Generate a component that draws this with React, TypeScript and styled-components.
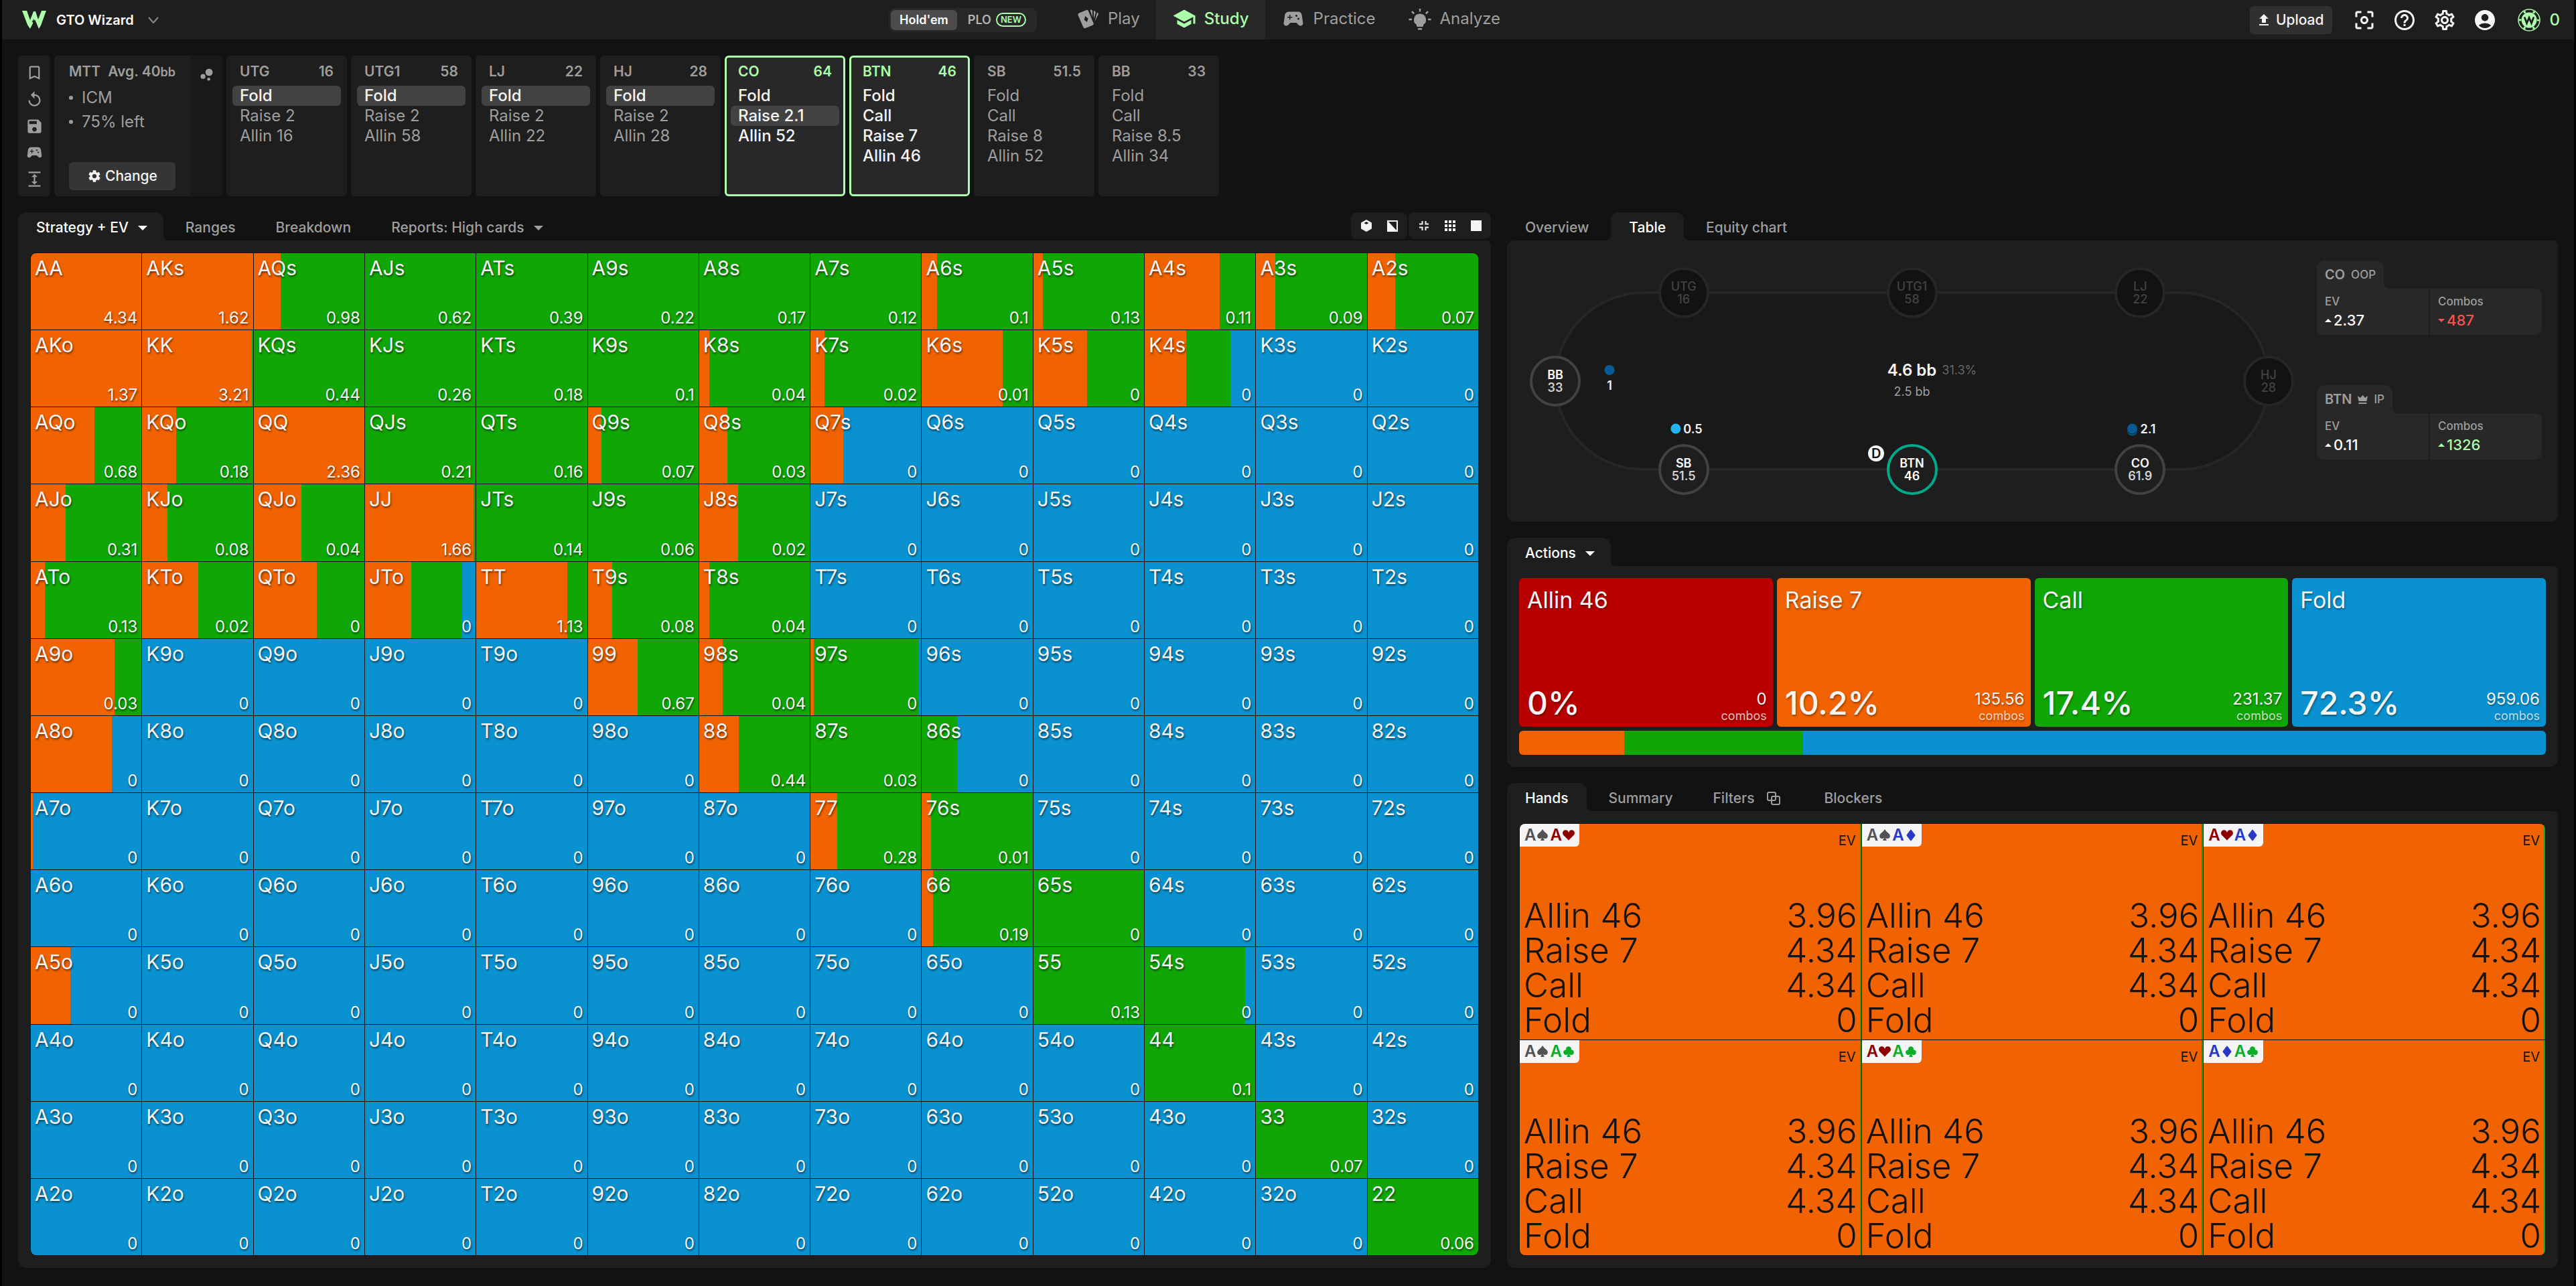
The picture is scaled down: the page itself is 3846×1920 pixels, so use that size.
import React from "react";
import styled, { createGlobalStyle, css } from "styled-components";
import {
  MdAccountCircle, MdApps, MdBookmarkBorder, MdBubbleChart, MdCenterFocusWeak, MdExpand, MdHelpOutline,
  MdOutlineSettings, MdReplay, MdSave, MdSchool, MdSettings, MdSportsEsports, MdUpload,
} from "react-icons/md";
import { BsSuitClubFill, BsSuitDiamondFill, BsSuitHeartFill, BsSuitSpadeFill } from "react-icons/bs";

const color = {
  page: "#121212",
  panel: "#1e1e1e",
  raised: "#282828",
  muted: "#9e9e9e",
  text: "#f5f5f5",
  mint: "#acfdac",
  allin: "#b80000",
  raise: "#f16300",
  call: "#10a606",
  fold: "#0a92d0",
};

const GlobalStyle = createGlobalStyle`
  * { box-sizing: border-box; }
  body { margin: 0; background: ${color.page}; color: ${color.text}; font: 400 24px/30px Inter, "Liberation Sans", sans-serif; }
  button { font: inherit; color: inherit; background: none; border: 0; padding: 0; cursor: pointer; text-align: left; }
  a { color: inherit; text-decoration: none; }
  ul, dl, dd { margin: 0; padding: 0; list-style: none; }
  svg { display: block; flex: none; }
`;

/* ---------- Shell ---------- */

const Shell = styled.div`
  min-height: 100vh;
  display: flex;
  flex-direction: column;
  border: solid #000;
  border-width: 0 3px;
`;

const TopBar = styled.header`
  display: grid;
  grid-template-columns: 1fr auto 1fr;
  height: 59px;
  background: ${color.panel};
  padding: 0 21px;
`;

const TopLeft = styled.div`
  display: flex;
  align-items: center;
  justify-content: space-between;
  padding: 0 34px 0 9px;
`;

const Brand = styled.button`
  display: flex;
  align-items: center;
  gap: 15px;
  font-size: 20px;
  font-weight: 600;
  color: #fff;
`;

const BrandName = styled.span`
  margin-right: 6px;
`;

const GameToggle = styled.div`
  display: flex;
  gap: 3px;
  padding: 3px;
  border-radius: 9px;
  background: #282828;
`;

const GameOption = styled.button<{ $on?: boolean }>`
  display: flex;
  align-items: center;
  gap: 7px;
  height: 30px;
  padding: 0 13px;
  border-radius: 6px;
  font-size: 18px;
  font-weight: 600;
  background: ${(p) => (p.$on ? "#4c4c4c" : "transparent")};
  color: ${(p) => (p.$on ? "#fff" : "#b4b4b4")};
`;

const NewBadge = styled.span`
  padding: 0 5px;
  border: 2px solid ${color.mint};
  border-radius: 11px;
  font-size: 13px;
  line-height: 17px;
  color: ${color.mint};
`;

const Nav = styled.nav`
  display: flex;
`;

const NavLink = styled.a<{ $on?: boolean }>`
  display: flex;
  align-items: center;
  gap: 12px;
  padding: 0 24px 3px;
  background: ${(p) => (p.$on ? color.raised : "transparent")};
  color: ${(p) => (p.$on ? color.mint : color.muted)};
  font-weight: ${(p) => (p.$on ? 500 : 400)};
`;

const TopRight = styled.div`
  display: flex;
  align-items: center;
  justify-content: flex-end;
  gap: 24px;
`;

const UploadButton = styled.button`
  display: flex;
  align-items: center;
  gap: 6px;
  height: 42px;
  padding: 0 12px 0 9px;
  margin-right: 6px;
  border-radius: 6px;
  background: #303030;
  font-size: 21px;
  font-weight: 500;
`;

const Balance = styled.button`
  display: flex;
  align-items: center;
  gap: 14px;
  margin-left: 7px;
  color: ${color.mint};
  font-weight: 500;
`;

/* ---------- Setup row ---------- */

const Body = styled.main`
  flex: 1;
  display: flex;
  flex-direction: column;
  gap: 24px;
  padding: 24px 24px 27px;
`;

const SetupRow = styled.div`
  display: flex;
  gap: 6px;
  height: 210px;
`;

const ToolColumn = styled.div`
  display: flex;
  flex-direction: column;
  justify-content: space-between;
  align-items: center;
  width: 48px;
  padding: 12px 0;
  border-radius: 6px;
  background: ${color.panel};
  color: ${color.muted};
`;

const SpotCard = styled.section`
  display: flex;
  width: 251px;
  border-radius: 6px;
  overflow: hidden;
  background: ${color.panel};
  color: ${color.muted};
`;

const SpotInfo = styled.div`
  flex: 1;
  display: flex;
  flex-direction: column;
  padding: 9px 22px;
`;

const SpotTitle = styled.div`
  display: flex;
  justify-content: space-between;
  font-size: 21px;
  font-weight: 600;
`;

const Unit = styled.small`
  font-size: 18px;
`;

const SpotFacts = styled.ul`
  padding-top: 5px;
  line-height: 36px;
`;

const SpotFact = styled.li`
  display: flex;
  align-items: center;
  gap: 13px;
  &::before {
    content: "";
    width: 6px;
    height: 6px;
    border-radius: 50%;
    background: currentColor;
  }
`;

const ChangeButton = styled.button`
  display: flex;
  align-items: center;
  justify-content: center;
  gap: 5px;
  height: 42px;
  margin-top: auto;
  border-radius: 6px;
  background: #353535;
  color: ${color.text};
  font-size: 21px;
  font-weight: 500;
`;

const SpotSide = styled.button`
  display: flex;
  justify-content: center;
  align-items: flex-start;
  width: 48px;
  padding-top: 15px;
  background: #191919;
`;

const PositionCard = styled.section<{ $active?: boolean }>`
  width: 180px;
  padding: 9px;
  border-radius: 6px;
  background: ${(p) => (p.$active ? color.raised : color.panel)};
  color: ${color.muted};
  ${(p) => p.$active && css`box-shadow: inset 0 0 0 3px ${color.mint};`}
`;

const PositionHead = styled.div<{ $active?: boolean }>`
  display: flex;
  justify-content: space-between;
  padding: 0 11px;
  margin-bottom: 6px;
  font-size: 21px;
  font-weight: 600;
  color: ${(p) => (p.$active ? color.mint : color.muted)};
`;

const PositionAction = styled.button<{ $picked?: boolean; $active?: boolean }>`
  display: block;
  width: 100%;
  height: 30px;
  padding: 0 11px;
  border-radius: 6px;
  line-height: 30px;
  background: ${(p) => (p.$picked ? "#424242" : "transparent")};
  color: ${(p) => (p.$picked || p.$active ? color.text : color.muted)};
  font-weight: ${(p) => (p.$picked || p.$active ? 500 : 400)};
`;

/* ---------- Tabbed panels ---------- */

const Columns = styled.div`
  flex: 1;
  display: grid;
  grid-template-columns: 2199fr 1569fr;
  gap: 24px;
`;

const Column = styled.div`
  display: flex;
  flex-direction: column;
  gap: 24px;
  min-width: 0;
`;

const Section = styled.section<{ $grow?: boolean }>`
  display: flex;
  flex-direction: column;
  flex: ${(p) => (p.$grow ? 1 : "none")};
`;

const TabBar = styled.div`
  display: flex;
  gap: 6px;
  height: 42px;
`;

const Tab = styled.button<{ $on?: boolean; $menu?: boolean }>`
  position: relative;
  display: flex;
  align-items: center;
  gap: 14px;
  padding: 4px ${(p) => (p.$menu ? 24 : 27)}px 0 27px;
  border-radius: 12px 12px 0 0;
  font-size: 21px;
  font-weight: 500;
  background: ${(p) => (p.$on ? color.panel : "transparent")};
  color: ${(p) => (p.$on ? "#fff" : color.muted)};
  ${(p) => p.$on && css`
    &::before, &::after {
      content: "";
      position: absolute;
      bottom: 0;
      width: 8px;
      height: 8px;
    }
    &::before { right: 100%; background: radial-gradient(circle at 0 0, transparent 8px, ${color.panel} 8px); }
    &::after { left: 100%; background: radial-gradient(circle at 100% 0, transparent 8px, ${color.panel} 8px); }
    &:first-child::before { display: none; }
  `}
`;

const Caret = styled.span<{ $up?: boolean; $small?: boolean }>`
  width: 0;
  height: 0;
  border: solid transparent;
  border-width: 0 ${(p) => (p.$small ? 5 : 7)}px;
  ${(p) => (p.$up ? "border-bottom" : "border-top")}: ${(p) => (p.$small ? 5 : 7)}px solid currentColor;
`;

const ViewTools = styled.div`
  display: flex;
  gap: 2px;
  margin-left: auto;
`;

const ViewGroup = styled.div`
  display: flex;
  height: 40px;
  padding: 0 3px;
  border-radius: 9px;
  background: ${color.panel};
`;

const ViewButton = styled.button`
  display: flex;
  align-items: center;
  justify-content: center;
  width: 39px;
`;

const Panel = styled.div<{ $square?: boolean }>`
  flex: 1;
  display: flex;
  flex-direction: column;
  padding: 18px;
  border-radius: ${(p) => (p.$square ? 0 : 12)}px 8px 12px 12px;
  background: ${color.panel};
`;

/* ---------- Range matrix ---------- */

const Matrix = styled.div`
  flex: 1;
  display: grid;
  grid-template-columns: repeat(13, 1fr);
  grid-auto-rows: minmax(90px, 1fr);
  gap: 1px;
  border: 1px solid ${color.page};
  border-radius: 9px;
  overflow: hidden;
  background: ${color.page};
`;

const HandCell = styled.button`
  display: flex;
  flex-direction: column;
  justify-content: space-between;
  padding: 7px 6px 2px;
  text-shadow: 1px 2px 3px rgba(0, 0, 0, 0.6);
`;

const HandName = styled.span`
  font-size: 30px;
  line-height: 30px;
`;

const HandEv = styled.span`
  align-self: flex-end;
  font-size: 24px;
  line-height: 30px;
`;

/* ---------- Poker table ---------- */

const TablePanel = styled(Panel)`
  flex-direction: row;
  padding: 0 24px 0 0;
`;

const TableArea = styled.div`
  flex: 1;
  padding: 78px 72px;
`;

const Felt = styled.div`
  position: relative;
  height: 264px;
`;

const FeltEdge = styled.div`
  position: absolute;
  inset: -2px;
  border: 4px solid #262626;
  border-radius: 134px;
  background: #191919;
`;

const Pinned = styled.div<{ $x: number; $y: number }>`
  position: absolute;
  left: ${(p) => p.$x}%;
  top: ${(p) => p.$y}%;
  transform: translate(-50%, -50%);
`;

const Seat = styled(Pinned)<{ $state: "out" | "in" | "hero" }>`
  display: flex;
  flex-direction: column;
  align-items: center;
  justify-content: center;
  width: 76px;
  height: 76px;
  border-radius: 50%;
  border: 4px solid ${(p) => ({ out: "#262626", in: "#424242", hero: "#00a98b" })[p.$state]};
  background: ${(p) => (p.$state === "out" ? color.page : color.panel)};
  color: ${(p) => (p.$state === "out" ? "#424242" : "#fff")};
  font-size: 18px;
  line-height: 19px;
  font-weight: ${(p) => (p.$state === "out" ? 500 : 600)};
`;

const SeatStack = styled.span<{ $dim?: boolean }>`
  color: ${(p) => (p.$dim ? "#d0d0d0" : "inherit")};
`;

const Bet = styled(Pinned)<{ $column?: boolean }>`
  display: flex;
  flex-direction: ${(p) => (p.$column ? "column" : "row")};
  align-items: center;
  gap: 4px;
  font-size: 18px;
  line-height: 23px;
  font-weight: 600;
`;

const Chip = styled.span<{ $color: string; $stacked?: boolean }>`
  width: 15px;
  height: 15px;
  border-radius: 50%;
  background: ${(p) => p.$color};
  ${(p) => p.$stacked && css`box-shadow: 0 1px 0 #191919, 0 3px 0 ${p.$color};`}
`;

const Dealer = styled(Pinned)`
  width: 24px;
  height: 24px;
  border-radius: 50%;
  background: ${color.text};
  color: ${color.page};
  font-size: 20px;
  line-height: 24px;
  font-weight: 600;
  text-align: center;
`;

const Pot = styled(Pinned)`
  font-weight: 600;
  white-space: nowrap;
`;

const PotOdds = styled.span`
  position: absolute;
  left: 100%;
  padding-left: 8px;
  font-size: 18px;
  font-weight: 400;
  color: #666;
`;

const PotBefore = styled(Pinned)`
  font-size: 18px;
  color: ${color.muted};
  white-space: nowrap;
`;

const PlayerStats = styled.div`
  display: flex;
  flex-direction: column;
  gap: 75px;
  width: 336px;
  padding-top: 30px;
`;

const PlayerTab = styled.div`
  position: relative;
  display: inline-flex;
  align-items: center;
  gap: 9px;
  height: 42px;
  padding: 0 12px;
  border-radius: 12px 12px 0 0;
  background: ${color.raised};
  color: ${color.muted};
  font-size: 20px;
  font-weight: 600;
  vertical-align: top;
  &::after {
    content: "";
    position: absolute;
    left: 100%;
    bottom: 0;
    width: 8px;
    height: 8px;
    background: radial-gradient(circle at 100% 0, transparent 8px, ${color.raised} 8px);
  }
`;

const PlayerRole = styled.span`
  font-size: 17px;
  font-weight: 500;
`;

const StatGrid = styled.dl`
  display: grid;
  grid-template-columns: 1fr 1fr;
  gap: 2px;
`;

const Stat = styled.div`
  height: 69px;
  padding: 6px 12px;
  background: ${color.raised};
  &:first-child { border-radius: 0 0 0 9px; }
  &:last-child { border-radius: 0 9px 9px 0; }
`;

const StatLabel = styled.dt`
  color: ${color.muted};
  font-size: 17px;
  line-height: 26px;
  font-weight: 500;
`;

const StatValue = styled.dd<{ $color: string }>`
  display: flex;
  align-items: center;
  gap: 3px;
  color: ${(p) => p.$color};
  font-size: 22px;
  font-weight: 500;
`;

/* ---------- Actions ---------- */

const ActionGrid = styled.div`
  display: grid;
  grid-template-columns: repeat(4, 1fr);
  gap: 6px;
`;

const ActionCard = styled.button<{ $color: string }>`
  display: flex;
  flex-direction: column;
  justify-content: space-between;
  height: 222px;
  padding: 12px 9px 6px 12px;
  border-radius: 6px;
  background: ${(p) => p.$color};
  text-shadow: 1px 2px 3px rgba(0, 0, 0, 0.4);
`;

const ActionName = styled.span`
  font-size: 34px;
  line-height: 42px;
`;

const ActionFoot = styled.span`
  display: flex;
  justify-content: space-between;
  align-items: flex-end;
  width: 100%;
`;

const ActionShare = styled.span`
  font-size: 48px;
  line-height: 58px;
  font-weight: 500;
`;

const ActionCombos = styled.span`
  display: flex;
  flex-direction: column;
  align-items: flex-end;
  font-size: 24px;
  line-height: 30px;
`;

const CombosLabel = styled.span`
  font-size: 18px;
  line-height: 20px;
  opacity: 0.75;
`;

const ShareBar = styled.div`
  display: flex;
  height: 36px;
  margin-top: 6px;
  border-radius: 6px;
  overflow: hidden;
`;

const ShareSlice = styled.div<{ $color: string }>`
  background: ${(p) => p.$color};
`;

/* ---------- Hands ---------- */

const ComboGrid = styled.div`
  flex: 1;
  display: grid;
  grid-template-columns: repeat(3, 1fr);
  grid-auto-rows: 1fr;
  gap: 1px;
  border: 1px solid ${color.page};
  border-radius: 9px;
  overflow: hidden;
  background: ${color.page};
`;

const ComboCell = styled.article`
  display: flex;
  flex-direction: column;
  justify-content: space-between;
  padding-bottom: 3px;
  background: ${color.raise};
  border-right: 2px solid ${color.call};
  color: ${color.page};
`;

const ComboHead = styled.header`
  display: flex;
  justify-content: space-between;
  align-items: flex-start;
`;

const ComboCards = styled.div`
  display: flex;
  align-items: center;
  gap: 2px;
  height: 34px;
  padding: 0 7px;
  border-radius: 0 0 6px 0;
  background: ${color.text};
  font-weight: 600;
`;

const PlayingCard = styled.span<{ $color: string }>`
  display: flex;
  align-items: center;
  gap: 1px;
  color: ${(p) => p.$color};
`;

const ComboMetric = styled.span`
  padding: 10px 6px 0 0;
  font-size: 20px;
`;

const ComboTable = styled.table`
  width: 100%;
  border-collapse: collapse;
  font-size: 51px;
  line-height: 52px;
  font-weight: 300;
`;

const ComboAction = styled.th`
  padding: 0 0 0 6px;
  font-weight: 300;
  text-align: left;
`;

const ComboEv = styled.td`
  padding: 0 4px 0 0;
  text-align: right;
`;

/* ---------- Drawings ---------- */

const WizardLogo = () => (
  <svg width="36" height="27" viewBox="0 0 36 27" fill={color.mint} aria-hidden="true">
    <path d="M0 0h7l5 14 5-13h3l4 12 5-13h7l-8 22-3 5-6-14-7 14-4-6z" />
    <path d="M17 12l1 3 2 1-2 1-1 4-1-4-2-1 2-1z" fill={color.panel} />
  </svg>
);

const ChevronDown = () => (
  <svg width="16" height="10" viewBox="0 0 16 10" fill="none" stroke="#8a8a8a" strokeWidth="2" aria-hidden="true">
    <path d="M1 1l7 8 7-8" />
  </svg>
);

const CardsIcon = () => (
  <svg width="36" height="36" viewBox="0 0 36 36" fill="currentColor" aria-hidden="true">
    <path fillRule="evenodd" d="M3.500 12.500a2.500 2.500 0 0 1 1.500-3L16 5a2.500 2.500 0 0 1 3 1.400l7.500 18.200a2.500 2.500 0 0 1-1.400 3.200L14.500 32a2.500 2.500 0 0 1-3.200-1.400zM14.200 14l-1.500 5.500 4.300 3.500 1.500-5.500z" />
    <path d="M21.500 4.500h1a2.500 2.500 0 0 1 2.500 2.500v9z" />
    <path d="M27 6l1.500.6a2.500 2.500 0 0 1 1.200 3L27 18z" />
    <path d="M32 8.500l.8.500a2.500 2.500 0 0 1 1 2.500L28.500 22z" />
  </svg>
);

const BulbIcon = () => (
  <svg width="36" height="36" viewBox="0 0 36 36" fill="currentColor" aria-hidden="true">
    <path d="M18 10.500a9 9 0 0 1 5 16.500v1.500a1.500 1.500 0 0 1-1.500 1.500h-7a1.500 1.500 0 0 1-1.500-1.500V27a9 9 0 0 1 5-16.500zM15 32h6v2.500h-6z" />
    <path d="M16.800 3h2.400v4.500h-2.400zM1.500 17.800H6v2.400H1.500zM30 17.800h4.500v2.400H30zM5 8l1.800-1.800 3.400 3.300-1.800 1.800zM31 8l-1.800-1.800-3.400 3.300 1.800 1.800z" />
  </svg>
);

const ChipIcon = () => (
  <svg width="34" height="34" viewBox="0 0 34 34" fill="none" stroke={color.mint} aria-hidden="true">
    <circle cx="17" cy="17" r="16" strokeWidth="1.500" />
    <circle cx="17" cy="17" r="13.500" strokeWidth="3.500" strokeDasharray="3 11.100" strokeDashoffset="1.500" />
    <circle cx="17" cy="17" r="11.500" fill={color.mint} stroke="none" />
    <path d="M10 12.500l3.500 9 3.500-8 3.500 8 3.500-9" stroke={color.panel} strokeWidth="2.800" />
  </svg>
);

const DiceIcon = () => (
  <svg width="16" height="18" viewBox="0 0 16 18" aria-hidden="true">
    <path fill={color.text} d="M8 0l8 4.500v9L8 18l-8-4.500v-9z" />
    <path fill={color.panel} d="M8 3l3.500 2L8 7 4.500 5z" />
  </svg>
);

const ContrastIcon = () => (
  <svg width="16" height="17" viewBox="0 0 16 17" aria-hidden="true">
    <rect x="1" y="1" width="14" height="15" fill="none" stroke={color.text} strokeWidth="2" />
    <path fill={color.text} d="M1 1l14 15H1z" />
  </svg>
);

const CompactIcon = () => (
  <svg width="14" height="14" viewBox="0 0 14 14" fill="none" stroke={color.text} strokeWidth="2" aria-hidden="true">
    <path d="M0 4.500h4.500V0M9.500 0v4.500H14M14 9.500H9.500V14M4.500 14V9.500H0" />
  </svg>
);

const SquareIcon = () => (
  <svg width="16" height="16" viewBox="0 0 16 16" aria-hidden="true"><rect width="16" height="16" fill={color.text} /></svg>
);

const OverlapIcon = () => (
  <svg width="30" height="20" viewBox="-5 0 30 20" fill="none" stroke="currentColor" strokeWidth="2" aria-hidden="true">
    <rect x="1" y="1" width="12" height="12" rx="2" />
    <rect x="7" y="7" width="12" height="12" rx="2" />
  </svg>
);

const CrownIcon = () => (
  <svg width="15" height="13" viewBox="0 0 15 13" fill="currentColor" aria-hidden="true">
    <path d="M0 1l4 3 3.500-4L11 4l4-3-1.500 8h-12zM1.500 11h12v2h-12z" />
  </svg>
);

/* ---------- Data ---------- */

const positions = [
  { name: "UTG", stack: "16", actions: ["Fold", "Raise 2", "Allin 16"], picked: 0 },
  { name: "UTG1", stack: "58", actions: ["Fold", "Raise 2", "Allin 58"], picked: 0 },
  { name: "LJ", stack: "22", actions: ["Fold", "Raise 2", "Allin 22"], picked: 0 },
  { name: "HJ", stack: "28", actions: ["Fold", "Raise 2", "Allin 28"], picked: 0 },
  { name: "CO", stack: "64", actions: ["Fold", "Raise 2.1", "Allin 52"], picked: 1, active: true },
  { name: "BTN", stack: "46", actions: ["Fold", "Call", "Raise 7", "Allin 46"], picked: -1, active: true },
  { name: "SB", stack: "51.5", actions: ["Fold", "Call", "Raise 8", "Allin 52"], picked: -1 },
  { name: "BB", stack: "33", actions: ["Fold", "Call", "Raise 8.5", "Allin 34"], picked: -1 },
];

const ranks = "AKQJT98765432".split("");

/* hand -> [raise %, raise + call %, EV]; a hand that is not listed always folds */
const strategy: Record<string, [number, number, number]> = {
  AA: [100, 100, 4.34], AKs: [100, 100, 1.62], AQs: [24, 100, 0.98], AJs: [0, 100, 0.62], ATs: [0, 100, 0.39],
  A9s: [0, 100, 0.22], A8s: [0, 100, 0.17], A7s: [0, 100, 0.12], A6s: [14, 100, 0.1], A5s: [8.5, 100, 0.13],
  A4s: [68, 100, 0.11], A3s: [17.5, 100, 0.09], A2s: [25, 100, 0.07],
  AKo: [100, 100, 1.37], KK: [98.5, 100, 3.21], KQs: [0, 100, 0.44], KJs: [0, 100, 0.26], KTs: [0, 100, 0.18],
  K9s: [0, 100, 0.1], K8s: [9, 100, 0.04], K7s: [13, 100, 0.02], K6s: [73, 100, 0.01], K5s: [48.5, 100, 0],
  K4s: [37.5, 77.5, 0],
  AQo: [57.5, 100, 0.68], KQo: [30.5, 100, 0.18], QQ: [100, 100, 2.36], QJs: [0, 100, 0.21], QTs: [0, 100, 0.16],
  Q9s: [12, 100, 0.07], Q8s: [25.5, 100, 0.03], Q7s: [30, 30, 0],
  AJo: [31.5, 100, 0.31], KJo: [23, 100, 0.08], QJo: [43, 100, 0.04], JJ: [98, 100, 1.66], JTs: [0, 100, 0.14],
  J9s: [0, 100, 0.06], J8s: [35, 100, 0.02],
  ATo: [12.5, 100, 0.13], KTo: [50.5, 100, 0.02], QTo: [57, 100, 0], JTo: [42, 88, 0], TT: [82, 100, 1.13],
  T9s: [22, 100, 0.08], T8s: [9, 100, 0.04],
  A9o: [75.5, 100, 0.03], "99": [45, 100, 0.67], "98s": [21.5, 100, 0.04], "97s": [3, 98, 0],
  A8o: [73.5, 73.5, 0], "88": [36, 100, 0.44], "87s": [0, 100, 0.03], "86s": [0, 32, 0],
  A7o: [2, 2, 0], "77": [24.5, 100, 0.28], "76s": [8.5, 100, 0.01],
  "66": [10, 100, 0.19], "65s": [0, 100, 0],
  A5o: [35.5, 35.5, 0], "55": [0, 100, 0.13], "54s": [0, 91, 0],
  "44": [0, 100, 0.1], "33": [0, 100, 0.07], "22": [0, 100, 0.06],
};

const handAt = (row: number, col: number) => {
  if (row === col) return ranks[row] + ranks[col];
  return row < col ? `${ranks[row]}${ranks[col]}s` : `${ranks[col]}${ranks[row]}o`;
};

const hands = ranks.flatMap((_, row) => ranks.map((__, col) => handAt(row, col)));

const mix = (r: number, c: number) =>
  `linear-gradient(90deg, ${color.raise} ${r}%, ${color.call} ${r}% ${c}%, ${color.fold} ${c}%)`;

const actions = [
  { name: "Allin 46", share: 0, combos: "0", color: color.allin },
  { name: "Raise 7", share: 10.2, combos: "135.56", color: color.raise },
  { name: "Call", share: 17.4, combos: "231.37", color: color.call },
  { name: "Fold", share: 72.3, combos: "959.06", color: color.fold },
];

const seats = [
  { name: "UTG", stack: "16", x: 18, y: 0, state: "out" },
  { name: "UTG1", stack: "58", x: 50, y: 0, state: "out" },
  { name: "LJ", stack: "22", x: 82, y: 0, state: "out" },
  { name: "HJ", stack: "28", x: 100, y: 50, state: "out" },
  { name: "CO", stack: "61.9", x: 82, y: 100, state: "in" },
  { name: "BTN", stack: "46", x: 50, y: 100, state: "hero" },
  { name: "SB", stack: "51.5", x: 18, y: 100, state: "in" },
  { name: "BB", stack: "33", x: 0, y: 50, state: "in" },
] as const;

const suits = {
  s: { color: "#525252", Icon: BsSuitSpadeFill },
  h: { color: "#8e0000", Icon: BsSuitHeartFill },
  d: { color: "#2a39c6", Icon: BsSuitDiamondFill },
  c: { color: "#0aae28", Icon: BsSuitClubFill },
};

const combos = ["sh", "sd", "hd", "sc", "hc", "dc"];
const comboEvs = [["Allin 46", "3.96"], ["Raise 7", "4.34"], ["Call", "4.34"], ["Fold", "0"]];

/* ---------- Parts ---------- */

const PlayerCard = ({ name, role, crown, ev, combos: n, down }: {
  name: string; role: string; crown?: boolean; ev: string; combos: string; down?: boolean;
}) => (
  <div>
    <PlayerTab>{name}{crown && <CrownIcon />}<PlayerRole>{role}</PlayerRole></PlayerTab>
    <StatGrid>
      <Stat>
        <StatLabel>EV</StatLabel>
        <StatValue $color="#fff"><Caret $small $up />{ev}</StatValue>
      </Stat>
      <Stat>
        <StatLabel>Combos</StatLabel>
        <StatValue $color={down ? "#f9524f" : color.mint}><Caret $small $up={!down} />{n}</StatValue>
      </Stat>
    </StatGrid>
  </div>
);

const Header = () => (
  <TopBar>
    <TopLeft>
      <Brand type="button"><WizardLogo /><BrandName>GTO Wizard</BrandName><ChevronDown /></Brand>
      <GameToggle>
        <GameOption type="button" $on>Hold'em</GameOption>
        <GameOption type="button">PLO <NewBadge>NEW</NewBadge></GameOption>
      </GameToggle>
    </TopLeft>
    <Nav>
      <NavLink href="#play"><CardsIcon />Play</NavLink>
      <NavLink href="#study" $on><MdSchool size={36} />Study</NavLink>
      <NavLink href="#practice"><MdSportsEsports size={36} />Practice</NavLink>
      <NavLink href="#analyze"><BulbIcon />Analyze</NavLink>
    </Nav>
    <TopRight>
      <UploadButton type="button"><MdUpload size={24} />Upload</UploadButton>
      <button type="button" aria-label="Focus"><MdCenterFocusWeak size={36} /></button>
      <button type="button" aria-label="Help"><MdHelpOutline size={36} /></button>
      <button type="button" aria-label="Settings"><MdOutlineSettings size={36} /></button>
      <button type="button" aria-label="Account"><MdAccountCircle size={36} /></button>
      <Balance type="button"><ChipIcon />0</Balance>
    </TopRight>
  </TopBar>
);

const Setup = () => (
  <SetupRow>
    <ToolColumn>
      <button type="button" aria-label="Bookmark"><MdBookmarkBorder size={27} /></button>
      <button type="button" aria-label="Reset"><MdReplay size={27} /></button>
      <button type="button" aria-label="Save"><MdSave size={27} /></button>
      <button type="button" aria-label="Practice"><MdSportsEsports size={27} /></button>
      <button type="button" aria-label="Expand"><MdExpand size={27} /></button>
    </ToolColumn>
    <SpotCard>
      <SpotInfo>
        <SpotTitle><span>MTT</span><span>Avg. 40<Unit>bb</Unit></span></SpotTitle>
        <SpotFacts><SpotFact>ICM</SpotFact><SpotFact>75% left</SpotFact></SpotFacts>
        <ChangeButton type="button"><MdSettings size={22} />Change</ChangeButton>
      </SpotInfo>
      <SpotSide type="button" aria-label="Stack distribution"><MdBubbleChart size={27} color={color.muted} /></SpotSide>
    </SpotCard>
    {positions.map((p) => (
      <PositionCard key={p.name} $active={p.active}>
        <PositionHead $active={p.active}><span>{p.name}</span><span>{p.stack}</span></PositionHead>
        {p.actions.map((a, i) => (
          <PositionAction key={a} type="button" $picked={i === p.picked} $active={p.active}>{a}</PositionAction>
        ))}
      </PositionCard>
    ))}
  </SetupRow>
);

const StrategySection = () => (
  <Section $grow>
    <TabBar>
      <Tab type="button" $on $menu>Strategy + EV<Caret /></Tab>
      <Tab type="button">Ranges</Tab>
      <Tab type="button">Breakdown</Tab>
      <Tab type="button" $menu>Reports: High cards<Caret /></Tab>
      <ViewTools>
        <ViewGroup>
          <ViewButton type="button" aria-label="Dice"><DiceIcon /></ViewButton>
          <ViewButton type="button" aria-label="Contrast"><ContrastIcon /></ViewButton>
        </ViewGroup>
        <ViewGroup>
          <ViewButton type="button" aria-label="Compact"><CompactIcon /></ViewButton>
          <ViewButton type="button" aria-label="Grid"><MdApps size={24} /></ViewButton>
          <ViewButton type="button" aria-label="Full"><SquareIcon /></ViewButton>
        </ViewGroup>
      </ViewTools>
    </TabBar>
    <Panel $square>
      <Matrix>
        {hands.map((hand) => {
          const [r, c, ev] = strategy[hand] ?? [0, 0, 0];
          return (
            <HandCell key={hand} type="button" style={{ background: mix(r, c) }}>
              <HandName>{hand}</HandName>
              <HandEv>{ev}</HandEv>
            </HandCell>
          );
        })}
      </Matrix>
    </Panel>
  </Section>
);

const TableSection = () => (
  <Section>
    <TabBar>
      <Tab type="button">Overview</Tab>
      <Tab type="button" $on>Table</Tab>
      <Tab type="button">Equity chart</Tab>
    </TabBar>
    <TablePanel>
      <TableArea>
        <Felt>
          <FeltEdge />
          {seats.map((s) => (
            <Seat key={s.name} $x={s.x} $y={s.y} $state={s.state}>
              {s.name}<SeatStack $dim={s.state === "in"}>{s.stack}</SeatStack>
            </Seat>
          ))}
          <Bet $x={7.6} $y={49} $column><Chip $color="#085a94" />1</Bet>
          <Bet $x={18.4} $y={77}><Chip $color="#22b3f0" />0.5</Bet>
          <Bet $x={82.2} $y={77}><Chip $color="#085a94" $stacked />2.1</Bet>
          <Dealer $x={45} $y={91}>D</Dealer>
          <Pot $x={50} $y={44}>4.6 bb<PotOdds>31.3%</PotOdds></Pot>
          <PotBefore $x={50} $y={56}>2.5 bb</PotBefore>
        </Felt>
      </TableArea>
      <PlayerStats>
        <PlayerCard name="CO" role="OOP" ev="2.37" combos="487" down />
        <PlayerCard name="BTN" role="IP" crown ev="0.11" combos="1326" />
      </PlayerStats>
    </TablePanel>
  </Section>
);

const ActionsSection = () => (
  <Section>
    <TabBar><Tab type="button" $on $menu>Actions<Caret /></Tab></TabBar>
    <Panel $square>
      <ActionGrid>
        {actions.map((a) => (
          <ActionCard key={a.name} type="button" $color={a.color}>
            <ActionName>{a.name}</ActionName>
            <ActionFoot>
              <ActionShare>{a.share}%</ActionShare>
              <ActionCombos>{a.combos}<CombosLabel>combos</CombosLabel></ActionCombos>
            </ActionFoot>
          </ActionCard>
        ))}
      </ActionGrid>
      <ShareBar>
        {actions.map((a) => <ShareSlice key={a.name} $color={a.color} style={{ flexGrow: a.share }} />)}
      </ShareBar>
    </Panel>
  </Section>
);

const HandsSection = () => (
  <Section $grow>
    <TabBar>
      <Tab type="button" $on>Hands</Tab>
      <Tab type="button">Summary</Tab>
      <Tab type="button">Filters <OverlapIcon /></Tab>
      <Tab type="button">Blockers</Tab>
    </TabBar>
    <Panel $square>
      <ComboGrid>
        {combos.map((combo) => (
          <ComboCell key={combo}>
            <ComboHead>
              <ComboCards>
                {combo.split("").map((key) => {
                  const { color: ink, Icon } = suits[key as keyof typeof suits];
                  return <PlayingCard key={key} $color={ink}>A<Icon size={18} /></PlayingCard>;
                })}
              </ComboCards>
              <ComboMetric>EV</ComboMetric>
            </ComboHead>
            <ComboTable>
              <tbody>
                {comboEvs.map(([name, ev]) => (
                  <tr key={name}><ComboAction scope="row">{name}</ComboAction><ComboEv>{ev}</ComboEv></tr>
                ))}
              </tbody>
            </ComboTable>
          </ComboCell>
        ))}
      </ComboGrid>
    </Panel>
  </Section>
);

export default function App() {
  return (
    <>
      <GlobalStyle />
      <Shell>
        <Header />
        <Body>
          <Setup />
          <Columns>
            <Column><StrategySection /></Column>
            <Column><TableSection /><ActionsSection /><HandsSection /></Column>
          </Columns>
        </Body>
      </Shell>
    </>
  );
}
